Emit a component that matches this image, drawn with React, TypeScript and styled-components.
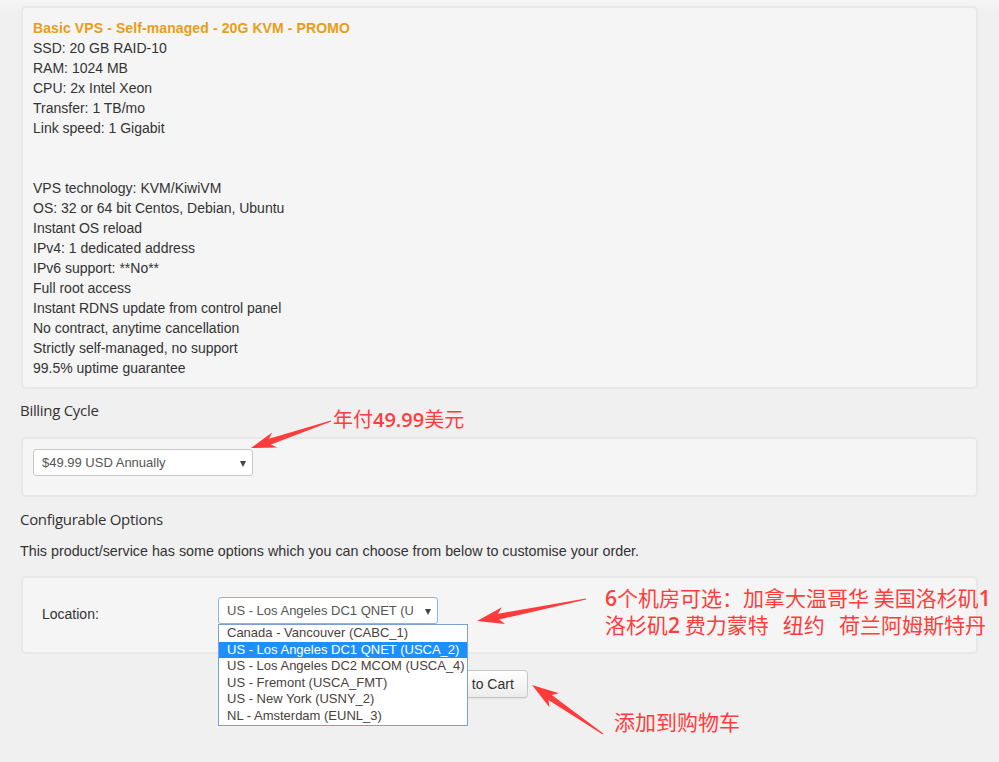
import React from "react";
import styled, { createGlobalStyle } from "styled-components";

const Global = createGlobalStyle`
  html, body { margin: 0; padding: 0; background: #f0f0f0; }
  body { font-family: "Liberation Sans", Arial, sans-serif; color: #333; }
`;

const Page = styled.div`
  position: relative;
  width: 999px;
  height: 762px;
  box-sizing: border-box;
  padding: 6px 21px 0 20px;
  overflow: hidden;
  background: linear-gradient(#f5f5f5 0px, #f0f0f0 12px);
`;

const Well = styled.div<{ $pt: number; $pb: number; $px: number }>`
  margin-left: 1px;
  background: #f5f5f5;
  border: 2px solid #e8e8e8;
  border-radius: 5px;
  padding: ${(p) => `${p.$pt}px ${p.$px}px ${p.$pb}px`};
  position: relative;
`;

const Lines = styled.div`
  font-size: 14px;
  line-height: 20px;
  color: #333;
`;

const Line = styled.div<{ $title?: boolean }>`
  min-height: 20px;
  font-weight: ${(p) => (p.$title ? 700 : 400)};
  color: ${(p) => (p.$title ? "#e99d17" : "#333")};
  letter-spacing: ${(p) => (p.$title ? "0.1px" : "0")};
`;

const Heading = styled.div<{ $mt: number; $mb: number }>`
  font-family: "Open Sans", "Noto Sans", sans-serif;
  font-size: 15px;
  line-height: 22px;
  color: #333;
  margin: ${(p) => `${p.$mt}px 0 ${p.$mb}px`};
  letter-spacing: -0.3px;
`;

const Desc = styled.div`
  font-size: 14.3px;
  line-height: 20px;
  color: #333;
  margin-bottom: 15px;
  white-space: nowrap;
`;

const FakeSelect = styled.div<{ $w: number; $h: number; $focus?: boolean }>`
  position: relative;
  width: ${(p) => p.$w}px;
  height: ${(p) => p.$h}px;
  box-sizing: border-box;
  background: #fff;
  border: 1px solid ${(p) => (p.$focus ? "#8fb4e3" : "#c8c8c8")};
  border-radius: 3px;
  font-size: 13px;
  color: #555;
  display: flex;
  align-items: center;
  padding-left: 8px;
  padding-right: 24px;
  white-space: nowrap;
`;

const SelectText = styled.span`
  overflow: hidden;
  display: block;
  width: 100%;
`;

const Caret = styled.span`
  position: absolute;
  right: 6px;
  top: 50%;
  margin-top: -2px;
  width: 0;
  height: 0;
  border-left: 3.5px solid transparent;
  border-right: 3.5px solid transparent;
  border-top: 6px solid #444;
`;

const OptionRow = styled.div`
  display: grid;
  grid-template-columns: 176px 1fr;
  align-items: start;
`;

const Label = styled.div`
  font-size: 14px;
  line-height: 20px;
  padding-top: 7px;
  color: #333;
`;

const SelectWrap = styled.div`
  position: relative;
  width: 220px;
`;

const DropList = styled.div`
  position: absolute;
  left: 0;
  top: 100%;
  width: 250px;
  box-sizing: border-box;
  background: #fff;
  border: 1px solid #7b9fd6;
  z-index: 5;
  padding: 0 0 1px;
`;

const DropItem = styled.div<{ $active?: boolean }>`
  font-size: 13px;
  height: 16.5px;
  line-height: 16.5px;
  padding-left: 8px;
  white-space: nowrap;
  color: ${(p) => (p.$active ? "#fff" : "#4a3f3a")};
  background: ${(p) => (p.$active ? "#1e8fff" : "transparent")};
`;

const ButtonRow = styled.div`
  display: flex;
  padding: 16px 0 0 409px;
`;

const CartButton = styled.button`
  font-family: "Liberation Sans", Arial, sans-serif;
  font-size: 14px;
  height: 28px;
  padding: 0 13px;
  color: #333;
  background: linear-gradient(#ffffff, #ececec);
  border: 1px solid #c6c6c6;
  border-radius: 4px;
  box-shadow: 0 1px 1px rgba(0, 0, 0, 0.06);
`;

const Overlay = styled.svg`
  position: absolute;
  left: 0;
  top: 0;
  pointer-events: none;
  z-index: 10;
`;

const Note = styled.div<{ $x: number; $y: number; $size: number }>`
  position: absolute;
  left: ${(p) => p.$x}px;
  top: ${(p) => p.$y}px;
  font-family: "Noto Sans CJK SC", "Microsoft YaHei", sans-serif;
  font-size: ${(p) => p.$size}px;
  font-weight: 400;
  line-height: 26px;
  color: #ff3d3d;
  white-space: pre;
  z-index: 11;
`;

const Num = styled.span`
  font-family: "Open Sans", "Noto Sans", sans-serif;
  font-weight: 600;
`;

function arrow(
  x1: number,
  y1: number,
  x2: number,
  y2: number,
  headLen = 22,
  headW = 17,
  shaftW = 6,
  tailW = 1
) {
  const dx = x2 - x1;
  const dy = y2 - y1;
  const len = Math.hypot(dx, dy);
  const ux = dx / len;
  const uy = dy / len;
  const nx = -uy;
  const ny = ux;
  const bx = x2 - ux * headLen;
  const by = y2 - uy * headLen;
  const bbx = bx - ux * 5;
  const bby = by - uy * 5;
  const pts = [
    [x1 + (nx * tailW) / 2, y1 + (ny * tailW) / 2],
    [bx + (nx * shaftW) / 2, by + (ny * shaftW) / 2],
    [bbx + (nx * headW) / 2, bby + (ny * headW) / 2],
    [x2, y2],
    [bbx - (nx * headW) / 2, bby - (ny * headW) / 2],
    [bx - (nx * shaftW) / 2, by - (ny * shaftW) / 2],
    [x1 - (nx * tailW) / 2, y1 - (ny * tailW) / 2],
  ];
  return pts.map((p) => `${p[0].toFixed(1)},${p[1].toFixed(1)}`).join(" ");
}

const specs = [
  "SSD: 20 GB RAID-10",
  "RAM: 1024 MB",
  "CPU: 2x Intel Xeon",
  "Transfer: 1 TB/mo",
  "Link speed: 1 Gigabit",
  "",
  "",
  "VPS technology: KVM/KiwiVM",
  "OS: 32 or 64 bit Centos, Debian, Ubuntu",
  "Instant OS reload",
  "IPv4: 1 dedicated address",
  "IPv6 support: **No**",
  "Full root access",
  "Instant RDNS update from control panel",
  "No contract, anytime cancellation",
  "Strictly self-managed, no support",
  "99.5% uptime guarantee",
];

const locations = [
  "Canada - Vancouver (CABC_1)",
  "US - Los Angeles DC1 QNET (USCA_2)",
  "US - Los Angeles DC2 MCOM (USCA_4)",
  "US - Fremont (USCA_FMT)",
  "US - New York (USNY_2)",
  "NL - Amsterdam (EUNL_3)",
];

export default function App() {
  return (
    <>
      <Global />
      <Page>
        <Well $pt={10} $pb={9} $px={10}>
          <Lines>
            <Line $title>Basic VPS - Self-managed - 20G KVM - PROMO</Line>
            {specs.map((s, i) => (
              <Line key={i}>{s}</Line>
            ))}
          </Lines>
        </Well>

        <Heading $mt={10} $mb={16}>Billing Cycle</Heading>
        <Well $pt={10} $pb={19} $px={10}>
          <FakeSelect $w={220} $h={27}>
            <SelectText>$49.99 USD Annually</SelectText>
            <Caret />
          </FakeSelect>
        </Well>

        <Heading $mt={11} $mb={11}>Configurable Options</Heading>
        <Desc>
          This product/service has some options which you can choose from below to customise your order.
        </Desc>

        <Well $pt={19} $pb={28} $px={19}>
          <OptionRow>
            <Label>Location:</Label>
            <SelectWrap>
              <FakeSelect $w={220} $h={27} $focus>
                <SelectText>US - Los Angeles DC1 QNET (USCA_2)</SelectText>
                <Caret />
              </FakeSelect>
              <DropList>
                {locations.map((l, i) => (
                  <DropItem key={l} $active={i === 1}>
                    {l}
                  </DropItem>
                ))}
              </DropList>
            </SelectWrap>
          </OptionRow>
        </Well>

        <ButtonRow>
          <CartButton>Add to Cart</CartButton>
        </ButtonRow>

        <Overlay width={999} height={762} viewBox="0 0 999 762">
          <polygon points={arrow(331, 421, 251, 448, 20, 16, 6)} fill="#ff3b3b" />
          <polygon points={arrow(586, 599, 477, 621, 22, 17, 6)} fill="#ff3b3b" />
          <polygon points={arrow(603, 734, 532, 685, 22, 17, 6)} fill="#ff3b3b" />
        </Overlay>

        <Note $x={333} $y={406} $size={20}>
          年付<Num>49.99</Num>美元
        </Note>
        <Note $x={605} $y={584} $size={21}>
          <Num>6</Num>个机房可选：加拿大温哥华 美国洛杉矶<Num>1</Num>
          {"\n"}洛杉矶<Num>2</Num> 费力蒙特   纽约   荷兰阿姆斯特丹
        </Note>
        <Note $x={614} $y={708} $size={21}>添加到购物车</Note>
      </Page>
    </>
  );
}
